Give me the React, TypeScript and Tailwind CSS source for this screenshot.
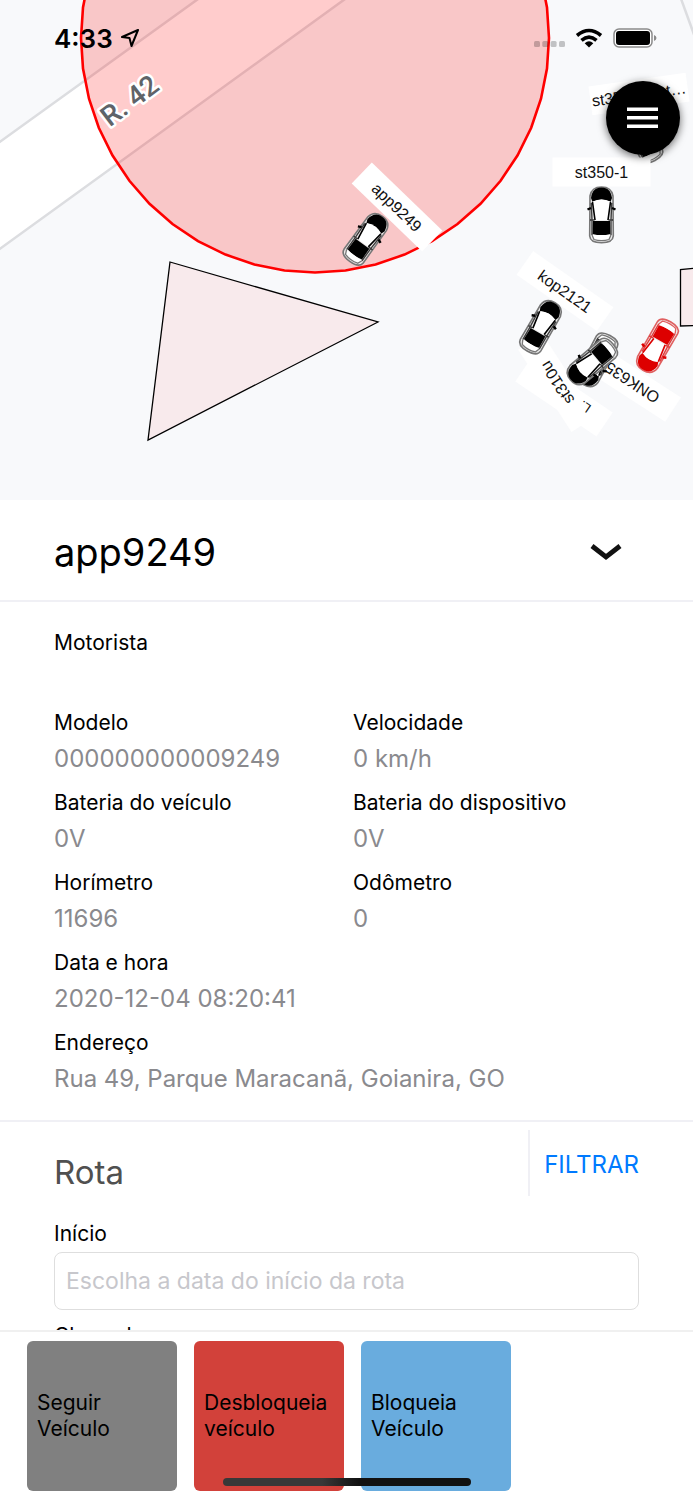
import React, { useState } from "react";

const HELV = "'Liberation Sans', Arial, sans-serif";

const ring = Array.from({ length: 48 }, (_, i) => {
  const a = (i * Math.PI) / 24;
  return `${(315 + 234 * Math.cos(a)).toFixed(1)},${(38 + 234.5 * Math.sin(a)).toFixed(1)}`;
}).join(" ");

type CarProps = { x: number; y: number; angle: number; color?: string; trim?: string };

function Car({ x, y, angle, color = "#000", trim = "#777" }: CarProps) {
  return (
    <g transform={`translate(${x} ${y}) rotate(${angle})`}>
      <path
        d="M-11.5 -19C-10.500 -25 -7 -28 0 -28S10.500 -25 11.5 -19L11.800 21C11.500 25.500 8 27.700 0 27.700S-11.500 25.500 -11.800 21Z"
        fill="#ececec"
        fillOpacity=".9"
        stroke={trim}
        strokeWidth="1.6"
      />
      <path d="M-10.500 -17C-9.500 -24 -6.500 -27.5 0 -27.5S9.500 -24 10.500 -17L9 -13Q0 -18 -9 -13Z" fill={color} />
      <path d="M-8.800 -13.500Q0 -17.5 8.800 -13.500L6 5H-6Z" fill="#fff" />
      <path d="M-8.500 6H8.500L8.800 19Q0 21.500 -8.800 19Z" fill={color} />
      <path d="M-9 -13L-6.5 5M9 -13L6.5 5" fill="none" stroke={color} strokeWidth="1.6" />
      <path
        d="M-10.200 -12L-9.500 5V20M10.200 -12L9.500 5V20M-11.500 5H-7M11.500 5H7"
        fill="none"
        stroke={color}
        strokeOpacity=".75"
        strokeWidth="1.4"
      />
      <path d="M-10.500 -7L-14 -5.500M10.500 -7L14 -5.500" stroke={color} strokeWidth="2.4" />
      <path d="M-9.500 20L-7.500 24.5Q0 26.800 7.500 24.5L9.500 20" fill="#fff" stroke={trim} strokeWidth="1.3" />
    </g>
  );
}

function Tag({ x, y, angle, text }: { x: number; y: number; angle: number; text?: string }) {
  return (
    <g transform={`translate(${x} ${y}) rotate(${angle})`}>
      <rect x="-49" y="-14.5" width="98" height="29" fill="#fff" />
      {text && (
        <text y="6" textAnchor="middle" fontSize="16" fill="#111" fontFamily={HELV}>
          {text}
        </text>
      )}
    </g>
  );
}

function MapView() {
  return (
    <svg
      viewBox="0 0 693 500"
      preserveAspectRatio="xMidYMid slice"
      className="block h-full w-full"
      role="img"
      aria-label="Mapa"
    >
      <rect width="693" height="500" fill="#f8f9fb" />
      <path d="M-10 149L205 -6H352L-10 256Z" fill="#fff" />
      <path d="M-10 149L205 -6M-10 256L352 -6" stroke="#dcdde0" strokeWidth="2.500" />
      <path d="M680 -4L696 40" stroke="#dcdde0" strokeWidth="2.5" />
      <polygon points={ring} fill="#ff0000" fillOpacity=".2" stroke="#ff0000" strokeWidth="2.6" />
      <polygon points="170,262 378,322 148,440" fill="#ff0000" fillOpacity=".06" stroke="#000" strokeWidth="1.3" />
      <path d="M696 268L680.500 269.500V326L696 325.500" fill="#ff0000" fillOpacity=".06" stroke="#000" strokeWidth="1.3" />
      <text
        transform="translate(130 101) rotate(-37)"
        y="9"
        textAnchor="middle"
        fontSize="28"
        fontWeight="500"
        fill="#5f6368"
        stroke="#fff"
        strokeWidth="5"
        strokeLinejoin="round"
        paintOrder="stroke"
        fontFamily="Roboto, sans-serif"
      >
        R. 42
      </text>
      <Tag x={397} y={207} angle={44} text="app9249" />
      <Car x={366} y={239} angle={36} />
      <Tag x={639} y={94} angle={-8} text="st350-test t…" />
      <Car x={642} y={136} angle={-28} />
      <Tag x={601.5} y={172} angle={0} text="st350-1" />
      <Car x={601.5} y={215} angle={0} />
      <Tag x={565} y={291} angle={35} text="kop2121" />
      <Tag x={564} y={397} angle={214} />
      <Tag x={632} y={383} angle={213} text="ONK635" />
      <Tag x={557} y={383} angle={237} text="st310u" />
      <text transform="translate(592 406) rotate(214)" fontSize="13" fill="#111" fontFamily={HELV}>
        L.
      </text>
      <Car x={541} y={327} angle={30} />
      <Car x={597} y={360} angle={208} />
      <Car x={592} y={362} angle={230} />
      <Car x={657} y={346} angle={210} color="#dd0000" trim="#e06060" />
    </svg>
  );
}

function StatusBar() {
  return (
    <div className="absolute inset-x-0 top-0 flex h-[76px] items-center justify-between pr-9 pl-[54px]">
      <div className="flex items-center gap-2">
        <span className="text-[26px] font-semibold">4:33</span>
        <svg width="20" height="20" viewBox="0 0 20 20" fill="none" stroke="#000" strokeWidth="2" strokeLinejoin="round">
          <path d="M17 2L1 9L8.500 10L10.500 18Z" />
        </svg>
      </div>
      <div className="flex items-center gap-2.5">
        <svg width="31" height="6" viewBox="0 0 31 6" className="mt-3" fill="#000" fillOpacity=".22">
          <rect width="6" height="6" rx="1.500" />
          <rect x="8.300" width="6" height="6" rx="1.500" />
          <rect x="16.600" width="6" height="6" rx="1.500" />
          <rect x="25" width="6" height="6" rx="1.500" />
        </svg>
        <svg width="28" height="20" viewBox="0 0 28 20" fill="none" stroke="#000" strokeWidth="3.600">
          <path d="M2 7.500Q14 -2.500 26 7.500M6.500 12.300Q14 6 21.500 12.300" />
          <path d="M9.700 15.200Q14 11.500 18.300 15.200L14 19.500Z" fill="#000" stroke="none" />
        </svg>
        <svg width="44" height="20" viewBox="0 0 44 20">
          <rect x="1" y="1" width="38" height="18" rx="5" fill="#fff" stroke="#8a8a8a" strokeWidth="1.500" />
          <rect x="3" y="3" width="34" height="14" rx="3" fill="#000" />
          <path d="M41 7Q43.500 8 43.500 10T41 13Z" fill="#8a8a8a" />
        </svg>
      </div>
    </div>
  );
}

function Field({ label, value, wide }: { label: string; value: string; wide?: boolean }) {
  return (
    <div className={wide ? "col-span-2 h-20" : "h-20"}>
      <dt className="text-[21px] leading-9">{label}</dt>
      <dd className="text-[24px] leading-9 text-[#8a8a8e]">{value}</dd>
    </div>
  );
}

const actions = [
  { lines: ["Seguir", "Veículo"], tone: "bg-[#808080]" },
  { lines: ["Desbloqueia", "veículo"], tone: "bg-[#d2413a]" },
  { lines: ["Bloqueia", "Veículo"], tone: "bg-[#69acde]" },
];

export default function App() {
  const [start, setStart] = useState("");
  const [end, setEnd] = useState("");
  return (
    <main className="relative flex h-screen flex-col overflow-hidden bg-white font-[Inter,sans-serif] text-black">
      <section className="relative h-[500px] shrink-0">
        <MapView />
        <StatusBar />
        <button
          type="button"
          aria-label="Menu"
          className="absolute top-[81px] right-[13px] flex size-[74px] items-center justify-center rounded-full bg-black shadow-[0_2px_8px_rgba(0,0,0,0.6)]"
        >
          <svg width="32" height="22" viewBox="0 0 32 22" fill="#fff">
            <rect y="0.500" width="31" height="3.500" />
            <rect y="9" width="31" height="3.500" />
            <rect y="17.500" width="31" height="3.500" />
          </svg>
        </button>
      </section>

      <header className="flex h-[102px] shrink-0 items-center justify-between border-b-2 border-[#f0f0f5] pt-1 pr-[70px] pl-[54px]">
        <h1 className="text-[38px]">app9249</h1>
        <button type="button" aria-label="Recolher">
          <svg width="34" height="20" viewBox="0 0 34 20" fill="none" stroke="#111" strokeWidth="4.800">
            <path d="M3 4L17 15L31 4" />
          </svg>
        </button>
      </header>

      <div className="min-h-0 flex-1 overflow-hidden">
        <dl className="grid grid-cols-[299px_1fr] border-b-2 border-[#f0f0f5] px-[54px] pt-[23px] pb-[15px]">
          <Field label="Motorista" value="" wide />
          <Field label="Modelo" value="000000000009249" />
          <Field label="Velocidade" value="0 km/h" />
          <Field label="Bateria do veículo" value="0V" />
          <Field label="Bateria do dispositivo" value="0V" />
          <Field label="Horímetro" value="11696" />
          <Field label="Odômetro" value="0" />
          <Field label="Data e hora" value="2020-12-04 08:20:41" wide />
          <Field label="Endereço" value="Rua 49, Parque Maracanã, Goianira, GO" wide />
        </dl>
        <form className="px-[54px] pt-2" onSubmit={(e) => e.preventDefault()}>
          <div className="flex h-[66px] items-stretch justify-between">
            <h2 className="pt-4 text-[33px] leading-[52px] text-[#505050]">Rota</h2>
            <button type="submit" className="border-l-2 border-[#f0f0f5] pt-1 pl-[14px] text-[24px] text-[#007aff]">
              FILTRAR
            </button>
          </div>
          <label htmlFor="inicio" className="mt-5 block text-[21px] leading-9">
            Início
          </label>
          <input
            id="inicio"
            value={start}
            onChange={(e) => setStart(e.target.value)}
            placeholder="Escolha a data do início da rota"
            className="block h-[58px] w-full rounded-lg border border-[#dedede] px-[11px] text-[23px] placeholder:text-[#c7c7cc]"
          />
          <label htmlFor="chegada" className="mt-2 block text-[21px] leading-9">
            Chegada
          </label>
          <input
            id="chegada"
            value={end}
            onChange={(e) => setEnd(e.target.value)}
            className="block h-[58px] w-full rounded-lg border border-[#dedede] px-[11px] text-[23px]"
          />
        </form>
      </div>

      <footer className="relative flex h-[170px] shrink-0 gap-[17px] border-t-2 border-[#f0f0f0] bg-white px-[27px] pt-[9px]">
        {actions.map((a) => (
          <button
            key={a.lines[0]}
            type="button"
            className={`flex size-[150px] flex-col justify-center rounded-md px-[10px] text-left text-[21px] leading-[26px] ${a.tone}`}
          >
            <span>{a.lines[0]}</span>
            <span>{a.lines[1]}</span>
          </button>
        ))}
        <div className="absolute bottom-[14px] left-1/2 h-2 w-[248px] -translate-x-1/2 rounded-full bg-linear-to-r from-[#383838] from-40% to-[#111] to-55%" />
      </footer>
    </main>
  );
}
